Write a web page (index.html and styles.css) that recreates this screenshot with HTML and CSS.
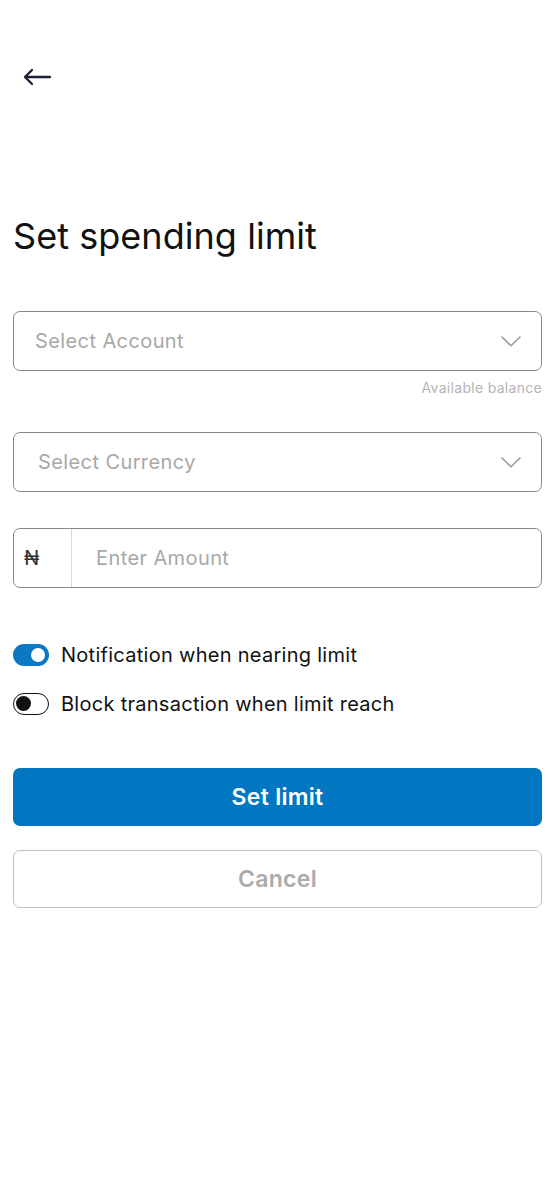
FILE: index.html
```html
<!DOCTYPE html>
<html>
<head>
<meta charset="utf-8">
<link rel="stylesheet" href="styles.css">
</head>
<body>
<div class="page">
  <div class="top">
    <svg class="back" width="30" height="18" viewBox="0 0 30 18"><path d="M28 9H3M10 2L3 9l7 7" fill="none" stroke="#1a1f36" stroke-width="2.3" stroke-linecap="round" stroke-linejoin="round"/></svg>
  </div>
  <h1 class="title">Set spending limit</h1>
  <div class="field select">
    <span class="ph acc">Select Account</span>
    <svg class="chev" width="20" height="11" viewBox="0 0 20 11"><path d="M1 1L10 9.8 19 1" fill="none" stroke="#9a9a9a" stroke-width="1.6" stroke-linecap="round" stroke-linejoin="round"/></svg>
  </div>
  <div class="hint">Available balance</div>
  <div class="field select cur">
    <span class="ph cur-ph">Select Currency</span>
    <svg class="chev" width="20" height="11" viewBox="0 0 20 11"><path d="M1 1L10 9.8 19 1" fill="none" stroke="#9a9a9a" stroke-width="1.6" stroke-linecap="round" stroke-linejoin="round"/></svg>
  </div>
  <div class="field amount">
    <span class="naira">₦</span>
    <span class="ph amt">Enter Amount</span>
  </div>
  <div class="toggles">
    <div class="trow"><span class="tog on"><span class="knob"></span></span><span class="tlabel">Notification when nearing limit</span></div>
    <div class="trow"><span class="tog off"><span class="knob"></span></span><span class="tlabel">Block transaction when limit reach</span></div>
  </div>
  <button class="btn primary">Set limit</button>
  <button class="btn ghost">Cancel</button>
</div>
</body>
</html>
```
FILE: styles.css
```css
* { box-sizing: border-box; }
body { margin: 0; background: #fff; font-family: Inter, "Noto Sans", sans-serif; }
.page { padding: 0 12px 0 13px; }
.top { height: 134px; padding-top: 68px; padding-left: 9px; }
.back { display: block; }
.title { margin: 80px 0 0 0; font-size: 36px; font-weight: 400; color: #111; line-height: 44px; letter-spacing: 0.05px; }
.field { height: 60px; border: 1.5px solid #8a8a8a; border-radius: 7px; display: flex; align-items: center; }
.select { margin-top: 53px; padding: 0 20px 0 21px; justify-content: space-between; }
.ph { font-size: 20px; color: #a8a8a8; letter-spacing: 0.4px; }
.hint { text-align: right; font-size: 14px; color: #b5b5b5; margin-top: 8px; line-height: 18px; letter-spacing: 0.3px; }
.select.cur { margin-top: 35px; padding-left: 24px; }
.amount { margin-top: 36px; padding: 0; }
.naira { width: 58px; height: 100%; border-right: 1px solid #d8d8d8; display: flex; align-items: center; padding-left: 10px; font-size: 20px; color: #333; }
.amt { padding-left: 24px; }
.toggles { margin-top: 56px; display: flex; flex-direction: column; gap: 27px; }
.trow { display: flex; align-items: center; height: 22px; }
.tog { width: 36px; height: 22px; border-radius: 11px; position: relative; flex: none; }
.tog.on { background: #0a78c2; }
.tog.off { background: #fff; border: 1.8px solid #111; }
.knob { position: absolute; width: 14px; height: 14px; border-radius: 50%; top: 4px; }
.tog.on .knob { background: #fff; right: 4px; }
.tog.off .knob { background: #111; left: 1.5px; top: 1.5px; width: 15.5px; height: 15.5px; }
.tlabel { margin-left: 12px; font-size: 20px; color: #111; letter-spacing: 0.28px; }
.btn { display: block; width: 100%; height: 58px; border-radius: 7px; font-family: Inter, sans-serif; font-size: 23px; font-weight: 600; letter-spacing: 0.3px; }
.primary { margin-top: 53px; background: #0077c0; color: #fff; border: none; }
.ghost { margin-top: 24px; background: #fff; color: #ababab; border: 1.5px solid #c0c0c0; }
```
